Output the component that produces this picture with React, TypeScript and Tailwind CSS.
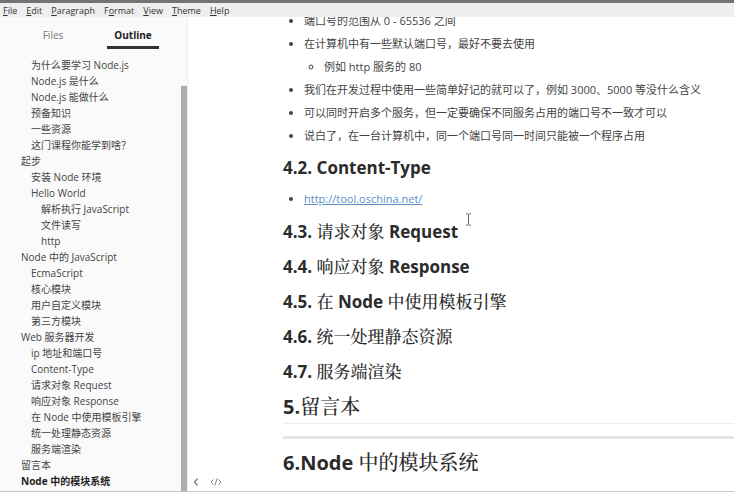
import { Fragment } from "react";

const menus: [string, string, string][] = [
  ["", "F", "ile"],
  ["", "E", "dit"],
  ["", "P", "aragraph"],
  ["F", "o", "rmat"],
  ["", "V", "iew"],
  ["", "T", "heme"],
  ["", "H", "elp"],
];

type Entry = { level: 1 | 2 | 3; text: string; active?: boolean };

const outline: Entry[] = [
  { level: 2, text: "为什么要学习 Node.js" },
  { level: 2, text: "Node.js 是什么" },
  { level: 2, text: "Node.js 能做什么" },
  { level: 2, text: "预备知识" },
  { level: 2, text: "一些资源" },
  { level: 2, text: "这门课程你能学到啥？" },
  { level: 1, text: "起步" },
  { level: 2, text: "安装 Node 环境" },
  { level: 2, text: "Hello World" },
  { level: 3, text: "解析执行 JavaScript" },
  { level: 3, text: "文件读写" },
  { level: 3, text: "http" },
  { level: 1, text: "Node 中的 JavaScript" },
  { level: 2, text: "EcmaScript" },
  { level: 2, text: "核心模块" },
  { level: 2, text: "用户自定义模块" },
  { level: 2, text: "第三方模块" },
  { level: 1, text: "Web 服务器开发" },
  { level: 2, text: "ip 地址和端口号" },
  { level: 2, text: "Content-Type" },
  { level: 2, text: "请求对象 Request" },
  { level: 2, text: "响应对象 Response" },
  { level: 2, text: "在 Node 中使用模板引擎" },
  { level: 2, text: "统一处理静态资源" },
  { level: 2, text: "服务端渲染" },
  { level: 1, text: "留言本" },
  { level: 1, text: "Node 中的模块系统", active: true },
];

const indent = { 1: "pl-[21px]", 2: "pl-[31px]", 3: "pl-[41px]" };

const sections = [
  "4.3. 请求对象 Request",
  "4.4. 响应对象 Response",
  "4.5. 在 Node 中使用模板引擎",
  "4.6. 统一处理静态资源",
  "4.7. 服务端渲染",
];

/* Latin runs stay bold, Chinese runs use a medium-weight serif. */
function Mixed({ text }: { text: string }) {
  return (
    <>
      {text.split(/([\u4e00-\u9fff]+)/).map((run, i) =>
        i % 2 ? (
          <span key={i} className="font-['Noto_Serif_CJK_SC','Noto_Sans_CJK_SC',serif] leading-none font-medium">
            {run}
          </span>
        ) : (
          <Fragment key={i}>{run}</Fragment>
        )
      )}
    </>
  );
}

function H3({ text }: { text: string }) {
  return (
    <h3 className="text-[17px] leading-[23px] font-bold text-[#2b2b2b]">
      <Mixed text={text} />
    </h3>
  );
}

export default function App() {
  return (
    <div className="flex h-screen flex-col overflow-hidden border-b border-[#c8c8c8] bg-white font-['Open_Sans','Noto_Sans_CJK_SC',sans-serif] text-[#444]">
      <header className="shrink-0 border-t-[3px] border-[#747474] bg-[#efefef]">
        <nav className="flex h-[14px] gap-[9px] pl-[3px] text-[9px] leading-4 text-[#333]">
          {menus.map(([before, key, after]) => (
            <button key={key + after} type="button" className="whitespace-nowrap">
              {before}
              <span className="underline">{key}</span>
              {after}
            </button>
          ))}
        </nav>
      </header>

      <div className="flex min-h-0 flex-1">
        <aside className="flex w-[188px] shrink-0 flex-col border-r border-[#f0f0f0] bg-[#fafafa]">
          <div className="flex shrink-0 gap-7 pl-[27px] text-[10px] leading-[22px]">
            <button type="button" className="w-[52px] border-b-[3px] border-transparent pt-[7px] text-[#777]">
              Files
            </button>
            <button type="button" className="w-[52px] border-b-[3px] border-[#333] pt-[7px] font-bold text-[#222]">
              Outline
            </button>
          </div>
          <div className="flex min-h-0 flex-1 pt-2">
            <ul className="flex-1 overflow-hidden text-[10px] leading-4">
              {outline.map((e) => (
                <li key={e.text} className={indent[e.level]}>
                  <a href="#top" className={e.active ? "font-bold whitespace-nowrap text-[#222]" : "whitespace-nowrap"}>
                    {e.text}
                  </a>
                </li>
              ))}
            </ul>
            <div className="flex w-[6px] shrink-0 flex-col pt-[29px]">
              <div className="flex-1 bg-[#adadad]" />
            </div>
          </div>
        </aside>

        <main className="relative min-w-0 flex-1 overflow-hidden">
          <article className="-mt-2 pl-[95px]">
            <ul className="list-disc pl-[21px] text-[11px] leading-[23px] whitespace-nowrap">
              <li>端口号的范围从 0 - 65536 之间</li>
              <li>
                在计算机中有一些默认端口号，最好不要去使用
                <ul className="list-[circle] pl-5">
                  <li>例如 http 服务的 80</li>
                </ul>
              </li>
              <li>我们在开发过程中使用一些简单好记的就可以了，例如 3000、5000 等没什么含义</li>
              <li>可以同时开启多个服务，但一定要确保不同服务占用的端口号不一致才可以</li>
              <li>说白了，在一台计算机中，同一个端口号同一时间只能被一个程序占用</li>
            </ul>

            <div className="flex flex-col gap-2 pt-[9px]">
              <H3 text="4.2. Content-Type" />
              <ul className="list-disc pl-[21px] text-[11px] leading-[23px]">
                <li>
                  <a href="#tool" className="text-[#5b8fc9] underline">
                    http://tool.oschina.net/
                  </a>
                </li>
              </ul>
              <div className="flex flex-col gap-3 pt-[2px]">
                {sections.map((s) => (
                  <H3 key={s} text={s} />
                ))}
              </div>
            </div>

            <h2 className="mt-2 border-b border-[#eee] text-[20px] leading-8 font-bold text-[#2b2b2b]">
              <Mixed text="5.留言本" />
            </h2>
            <hr className="mt-3 mb-2 h-[3px] border-0 bg-[#e5e5e5]" />
            <h2 className="text-[20px] leading-8 font-bold text-[#2b2b2b]">
              <Mixed text="6.Node 中的模块系统" />
            </h2>
          </article>

          <div className="absolute bottom-1 left-1 flex items-center gap-[10px] text-[#777]">
            <button type="button" aria-label="Hide sidebar">
              <svg width="8" height="10" viewBox="0 0 8 10" fill="none" stroke="currentColor" strokeWidth="1.200">
                <path d="M5.500 1.500 2.500 5l3 3.500" />
              </svg>
            </button>
            <button type="button" aria-label="Source mode">
              <svg width="12" height="10" viewBox="0 0 12 10" fill="none" stroke="currentColor" strokeWidth="0.900">
                <path d="M3.500 2.500 1 5l2.500 2.500M8.500 2.500 11 5 8.500 7.500M7 1.500l-2 7" />
              </svg>
            </button>
          </div>

          <svg className="absolute top-[196px] left-[277px]" width="7" height="13" viewBox="0 0 7 13" fill="none" stroke="#555" strokeWidth="0.900">
            <path d="M1 .8h1.700l.8.7.8-.7H6M3.500 1.500v10M1 12.200h1.700l.8-.7.8.7H6" />
          </svg>
        </main>
      </div>
    </div>
  );
}
